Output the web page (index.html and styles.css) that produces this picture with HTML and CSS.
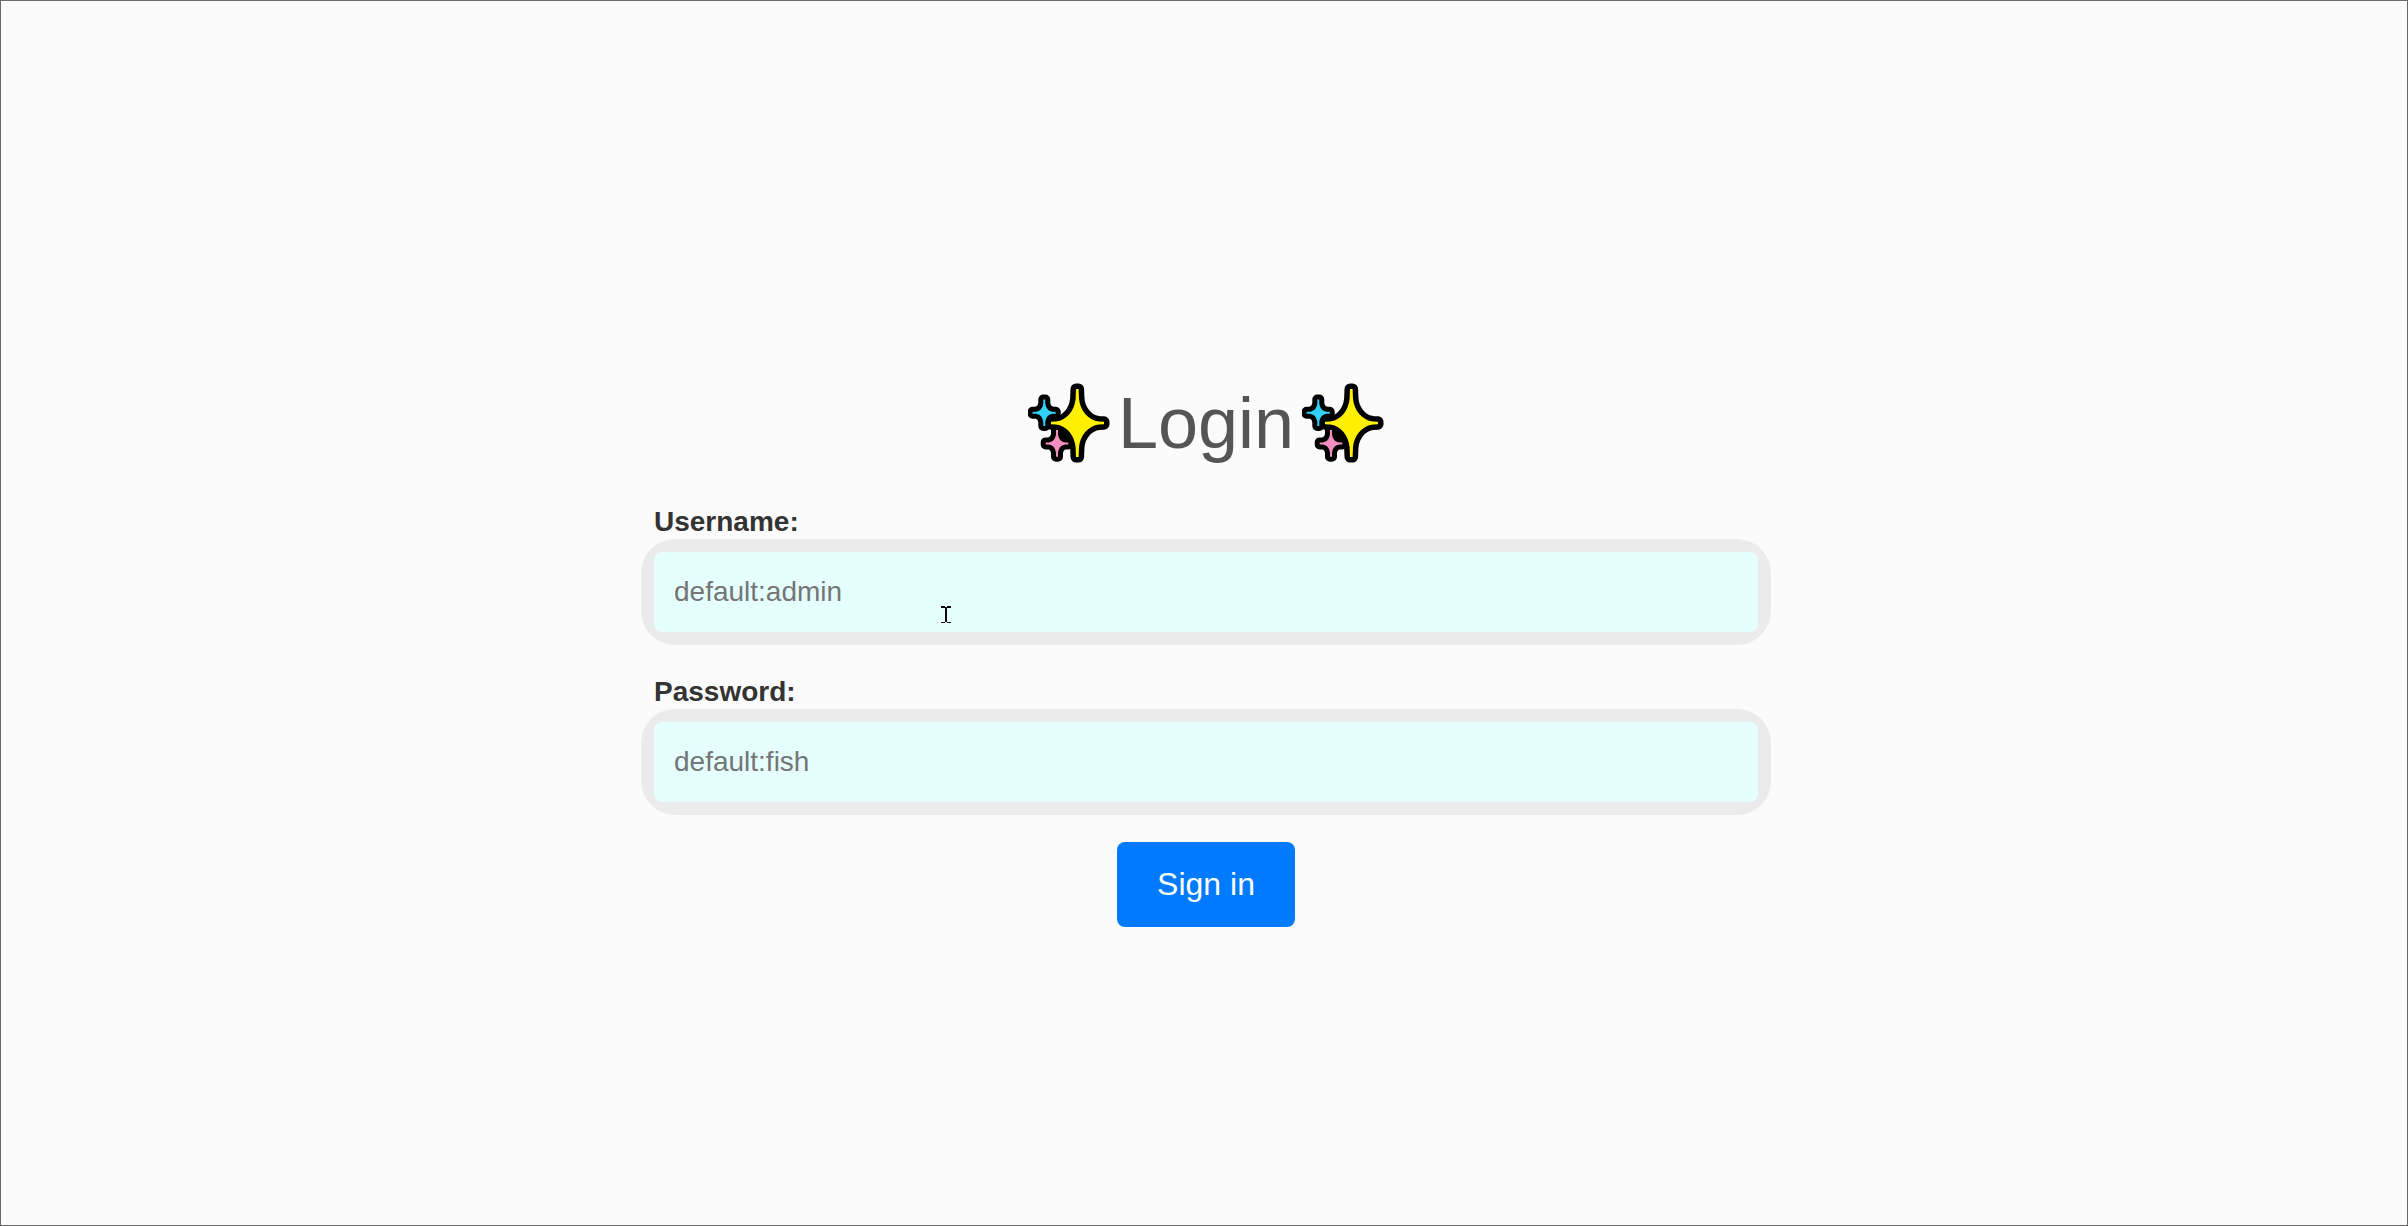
FILE: index.html
```html
<!DOCTYPE html>
<html lang="en">
<head>
<meta charset="utf-8">
<meta name="viewport" content="width=device-width, initial-scale=1">
<title>Login</title>
<link rel="stylesheet" href="styles.css">
</head>
<body>
<svg class="defs" aria-hidden="true">
  <defs>
    <path id="star-blue" d="M23.300 25.500h2v4C25.900 34 28 36.800 32.500 37.700h3.200v2h-3.200C28 40.600 25.900 43.400 25.300 48v4h-2v-4C22.700 43.400 20.600 40.600 16.100 39.700h-3.500v-2h3.500C20.600 36.800 22.700 34 23.300 29.500Z"/>
    <path id="star-pink" d="M36 56h2v4.200C38.600 64.700 40.700 67.500 45.100 68.400h3.200v2h-3.200C40.700 71.300 38.600 74.100 38 78.700v4h-2v-4C35.400 74.100 33.300 71.300 28.900 70.400h-3.200v-2h3.200C33.300 67.500 35.400 64.700 36 60.200Z"/>
    <path id="star-yellow" d="M56 15h2.600l.4 10C60 36 68 46.500 79 47.500l5 .2v2.600l-5 .2C68 51.500 60 62 59 73l-.4 10H56l-.4-10C54.600 62 47 51.500 36 50.500l-5-.2v-2.600l5-.2C47 46.500 54.600 36 55.600 25Z"/>
  </defs>
  <symbol id="sparkles" viewBox="8 9 82 80">
    <g fill="#000" stroke="#000" stroke-width="10" stroke-linejoin="round">
      <use href="#star-blue"/>
      <use href="#star-pink"/>
      <use href="#star-yellow" stroke-width="11"/>
    </g>
    <path d="M38 52h18v22H46z"/>
    <use href="#star-blue" fill="#30d0f8"/>
    <use href="#star-pink" fill="#f48fc0"/>
    <use href="#star-yellow" fill="#fff000"/>
  </symbol>
</svg>
<main class="login">
  <h1 class="title">
    <svg class="sparkles" aria-hidden="true"><use href="#sparkles"/></svg>
    <span>Login</span>
    <svg class="sparkles" aria-hidden="true"><use href="#sparkles"/></svg>
  </h1>
  <form class="form">
    <div class="group">
      <label class="label" for="username">Username:</label>
      <div class="field">
        <input class="input" id="username" type="text" placeholder="default:admin">
        <svg class="cursor" viewBox="0 0 10 17" shape-rendering="crispEdges" aria-hidden="true"><path fill="#100808" d="M0 0h4v1h2V0h4v2H6v14h4v1H6v-1H4v1H0v-1h4V2H0Z"/></svg>
      </div>
    </div>
    <div class="group">
      <label class="label" for="password">Password:</label>
      <div class="field">
        <input class="input" id="password" type="password" placeholder="default:fish">
      </div>
    </div>
    <button class="button" type="submit">Sign in</button>
  </form>
</main>
</body>
</html>
```
FILE: styles.css
```css
* {
  box-sizing: border-box;
}

body {
  margin: 0;
  min-height: 100vh;
  display: flex;
  align-items: center;
  justify-content: center;
  padding: 82px 16px 0 20px;
  border: 1px solid #6b6b6b;
  background: #fbfbfb;
  color: #333;
  font-family: Arial, "Liberation Sans", sans-serif;
}

.defs {
  position: absolute;
  width: 0;
  height: 0;
}

.login {
  width: 100%;
  max-width: 1104px;
}

.title {
  display: flex;
  align-items: center;
  justify-content: center;
  gap: 8px;
  margin: 0 0 40px;
  color: #555;
  font-size: 72px;
  font-weight: 400;
  line-height: 84px;
}

.sparkles {
  width: 82px;
  height: 80px;
}

.form {
  display: flex;
  flex-direction: column;
}

.group {
  margin-bottom: 30px;
}

.group:last-of-type {
  margin-bottom: 27px;
}

.label {
  display: block;
  font-size: 28px;
  font-weight: 700;
  line-height: 34px;
}

.field {
  position: relative;
  margin: 0 -13px;
  padding: 13px;
  border-radius: 34px;
  background: #ebebeb;
}

.input {
  display: block;
  width: 100%;
  height: 80px;
  padding: 0 20px;
  border: 0;
  border-radius: 8px;
  outline: 0;
  background: #e5ffff;
  color: #333;
  font: inherit;
  font-size: 28px;
}

.input::placeholder {
  color: #757575;
}

.cursor {
  position: absolute;
  top: 67px;
  left: 300px;
  width: 10px;
  height: 17px;
  pointer-events: none;
}

.button {
  align-self: center;
  padding: 24px 40px;
  border: 0;
  border-radius: 8px;
  background: #007bff;
  color: #fff;
  font: inherit;
  font-size: 32px;
  cursor: pointer;
}
```
